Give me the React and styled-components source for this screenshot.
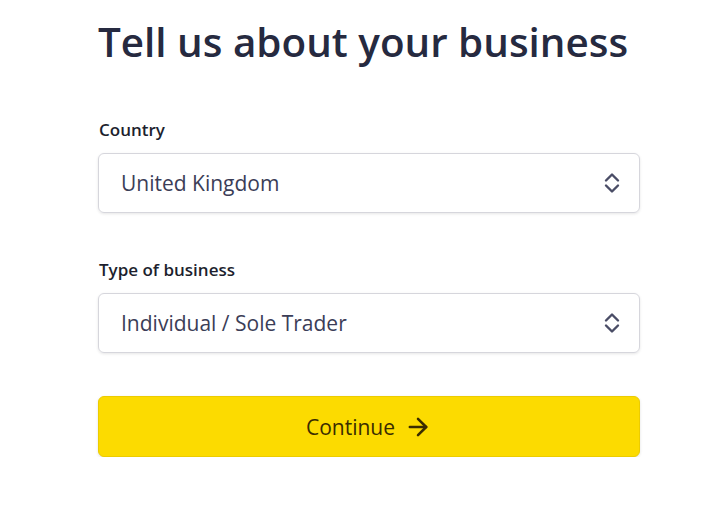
import React, { useState } from 'react';
import styled, { createGlobalStyle } from 'styled-components';
import { ArrowRight } from 'lucide-react';

const Global = createGlobalStyle`
  body {
    margin: 0;
    background: #fff;
    font-family: "Open Sans", "Noto Sans", sans-serif;
  }
`;

const Page = styled.div`
  width: 542px;
  margin-left: 98px;
  padding-top: 14px;
`;

const Title = styled.h1`
  margin: 0 0 48px 0;
  font-size: 40.4px;
  font-weight: 600;
  line-height: 56px;
  color: #262a40;
`;

const Field = styled.div`
  margin-bottom: 45px;
`;

const Label = styled.div`
  font-size: 17px;
  font-weight: 600;
  color: #1d1f2e;
  line-height: 24px;
  margin-bottom: 11px;
  margin-left: 1px;
`;

const SelectBox = styled.div`
  height: 60px;
  box-sizing: border-box;
  border: 1px solid #d6d6dc;
  border-radius: 6px;
  box-shadow: 0 1px 3px rgba(0, 0, 0, 0.1);
  display: flex;
  align-items: center;
  justify-content: space-between;
  padding: 0 18px 0 22px;
  font-size: 21px;
  font-weight: 500;
  color: #3b3d57;
`;

const Button = styled.button`
  width: 100%;
  height: 61px;
  border: 1px solid #eccc00;
  border-radius: 6px;
  background: #fcdb00;
  box-shadow: 0 1px 3px rgba(0, 0, 0, 0.12);
  display: flex;
  align-items: center;
  justify-content: center;
  gap: 9px;
  font-family: inherit;
  font-size: 21px;
  font-weight: 500;
  color: #3a2c00;
  cursor: pointer;
  margin-top: -2px;
`;

const UpDown = () => (
  <svg width="18" height="24" viewBox="0 0 18 24" fill="none" stroke="#4a4d66" strokeWidth="2.4" strokeLinecap="round" strokeLinejoin="round">
    <path d="M3 9.5 9 3.5l6 6" />
    <path d="M3 14.5l6 6 6-6" />
  </svg>
);

export default function App() {
  const [country] = useState('United Kingdom');
  const [type] = useState('Individual / Sole Trader');
  return (
    <Page>
      <Global />
      <Title>Tell us about your business</Title>
      <Field>
        <Label>Country</Label>
        <SelectBox>
          {country}
          <UpDown />
        </SelectBox>
      </Field>
      <Field>
        <Label>Type of business</Label>
        <SelectBox>
          {type}
          <UpDown />
        </SelectBox>
      </Field>
      <Button>
        Continue
        <ArrowRight size={28} strokeWidth={2.2} />
      </Button>
    </Page>
  );
}
